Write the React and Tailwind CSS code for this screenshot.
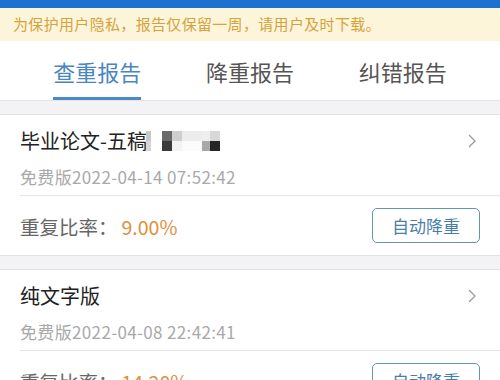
import React from "react";

const FONT = { fontFamily: '"Noto Sans CJK SC", "Noto Sans", sans-serif' };

function Chevron() {
  return (
    <svg width="10" height="14" viewBox="0 0 10 14" className="shrink-0">
      <polyline points="2,1 8,7 2,13" fill="none" stroke="#9a9a9a" strokeWidth="1.3" />
    </svg>
  );
}

function Mosaic() {
  const cols = [
    { w: 5, t: "#c8c8c8", b: "#d6d6d6" },
    { w: 11, t: "#ffffff", b: "#ffffff" },
    { w: 10, t: "#6a6a6a", b: "#3a3a3a" },
    { w: 10, t: "#cfcfcf", b: "#f3f3f3" },
    { w: 20, t: "#ececec", b: "#fbfbfb" },
    { w: 8, t: "#eeeeee", b: "#a8a8a8" },
    { w: 10, t: "#d8d8d8", b: "#262626" },
  ];
  return (
    <div className="flex -ml-[1px]">
      {cols.map((c, i) => (
        <div key={i} className="flex flex-col" style={{ width: c.w }}>
          <div className="h-[10px]" style={{ background: c.t }} />
          <div className="h-[10px]" style={{ background: c.b }} />
        </div>
      ))}
    </div>
  );
}

function Card({ title, mosaic, date, rate }) {
  return (
    <div className="bg-white pl-5">
      <div className="pt-[12px] pb-[6px] pr-[23px]">
        <div className="flex items-center justify-between h-[28px]">
          <div className="flex items-center">
            <span className="text-[20px] leading-[28px] text-[#222222]">{title}</span>
            {mosaic && <Mosaic />}
          </div>
          <Chevron />
        </div>
        <div className="mt-[10px] text-[17px] leading-[24px] tracking-[0.35px] text-[#a9a9a9]">{date}</div>
      </div>
      <div className="h-px bg-[#e6e6e6]" />
      <div className="flex items-center justify-between py-[12px] pr-5">
        <div className="text-[19.5px] leading-[26px] mt-[3px] flex">
          <span className="text-[#666666]">重复比率：</span>
          <span className="text-[#e08f3c] ml-[4px]">{rate}</span>
        </div>
        <div className="w-[108px] h-[35px] rounded-[5px] border border-[#6394b8] flex items-center justify-center text-[17px] text-[#4a7eaa]">
          自动降重
        </div>
      </div>
    </div>
  );
}

export default function App() {
  return (
    <div className="w-[500px] h-[380px] overflow-hidden bg-[#f3f3f5]" style={FONT}>
      <div className="h-[8px] bg-[#1e71cf]" />
      <div className="h-[33px] bg-[#fcf5da] flex items-center pl-[13px] text-[15px] tracking-[0.33px] text-[#d6a23c]">
        为保护用户隐私，报告仅保留一周，请用户及时下载。
      </div>
      <div className="h-[60px] bg-white flex px-[21px] border-b border-[#e4e4e4]">
        {[
          ["查重报告", true],
          ["降重报告", false],
          ["纠错报告", false],
        ].map(([t, a]) => (
          <div key={t} className="flex-1 flex flex-col items-center">
            <div
              className={
                "flex-1 flex items-center pt-[4px] text-[22px] " +
                (a ? "text-[#4a86c0]" : "text-[#555555]")
              }
            >
              {t}
            </div>
            <div className={"h-[3px] w-[88px] " + (a ? "bg-[#4a89c6]" : "bg-transparent")} />
          </div>
        ))}
      </div>
      <div className="h-[14px] border-b border-[#e2e2e2]" />
      <Card title="毕业论文-五稿" mosaic date="免费版2022-04-14 07:52:42" rate="9.00%" />
      <div className="h-[15px] border-y border-[#e2e2e2]" />
      <Card title="纯文字版" date="免费版2022-04-08 22:42:41" rate="14.20%" />
    </div>
  );
}
